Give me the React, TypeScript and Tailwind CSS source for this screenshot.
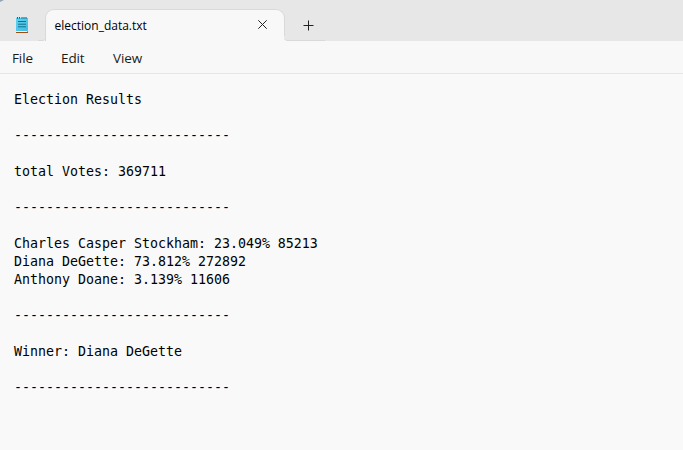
import React from "react";

const rule = "-".repeat(27);

const lines = [
  "Election Results",
  "",
  rule,
  "",
  "total Votes: 369711",
  "",
  rule,
  "",
  "Charles Casper Stockham: 23.049% 85213",
  "Diana DeGette: 73.812% 272892",
  "Anthony Doane: 3.139% 11606",
  "",
  rule,
  "",
  "Winner: Diana DeGette",
  "",
  rule,
];

function NotepadIcon() {
  return (
    <svg width="14" height="18" viewBox="0 0 14 18">
      <defs>
        <linearGradient id="page" x1="0" y1="0" x2="1" y2="1">
          <stop offset="0" stopColor="#63d3f0" />
          <stop offset="1" stopColor="#3fbce0" />
        </linearGradient>
      </defs>
      <path d="M1 15h12v1H1z" fill="#f3f3f3" />
      <path d="M1 16h12v1H1z" fill="#a04c10" />
      <path d="M1 2h12v12L12 15H1z" fill="url(#page)" />
      <path d="M12 15l1-1v2h-1z" fill="#d98a4d" />
      <path d="M2.5 1v1.7M4.5 1v1.7M7 1v1.7M9 1v1.7M11 1v1.7" stroke="#176580" strokeWidth="1.1" />
      <path d="M3 5.5h8M3 8.2h8M3 10.8h8" stroke="#14708f" strokeWidth="1" />
    </svg>
  );
}

export default function App() {
  return (
    <div className="flex h-[450px] w-[683px] flex-col overflow-hidden bg-[#f9f9f9] font-['Open_Sans','Noto_Sans',sans-serif] text-[#1b1b1b]">
      <header className="relative flex h-[41px] shrink-0 items-end bg-[#e7e7e7]">
        <div className="absolute left-0 top-0 size-[4px] bg-[#91a5b8] [clip-path:polygon(0_0,100%_0,0_50%)]" />
        <div className="flex h-full w-[38px] pl-[15px] pt-4">
          <NotepadIcon />
        </div>
        <div className="h-[5px] w-2 bg-[#f8f8f8]">
          <div className="h-full w-full rounded-br-[4px] border-b border-[#d9d9d9] bg-[#e7e7e7]" />
        </div>
        <div className="-ml-px flex h-8 w-[240px] items-center justify-between rounded-t-[9px] border border-b-0 border-[#d9d9d9] bg-[#f8f8f8] pl-[8.5px] pr-4">
          <span className="text-[12px] font-medium leading-4 text-black">election_data.txt</span>
          <svg className="mb-0.5" width="11" height="11" viewBox="0 0 11 11" fill="none" stroke="#222" strokeWidth="1">
            <path d="M1.3 1.3l8.4 8.4M9.7 1.3l-8.4 8.4" />
          </svg>
        </div>
        <div className="-ml-px h-[5px] w-[41px] bg-[#f8f8f8]">
          <div className="h-full w-full rounded-bl-[4px] border-b border-[#d9d9d9] bg-[#e7e7e7]" />
        </div>
        <svg className="-ml-[22px] mb-[10px]" width="11" height="11" viewBox="0 0 11 11" stroke="#222">
          <path d="M0.5 5.5h10M5.5 0.5v10" />
        </svg>
      </header>
      <nav className="flex h-[33px] shrink-0 items-center border-b border-[#e5e5e5] bg-[#f8f8f8] pl-3 pt-[2px] text-[13.5px] leading-5 tracking-[-0.1px]">
        <span className="w-[49px]">File</span>
        <span className="w-[52px]">Edit</span>
        <span>View</span>
      </nav>
      <pre className="pl-[14px] pt-[17px] font-['DejaVu_Sans_Mono',monospace] text-[13.29px] leading-[18px] text-black">
        {lines.join("\n")}
      </pre>
    </div>
  );
}
